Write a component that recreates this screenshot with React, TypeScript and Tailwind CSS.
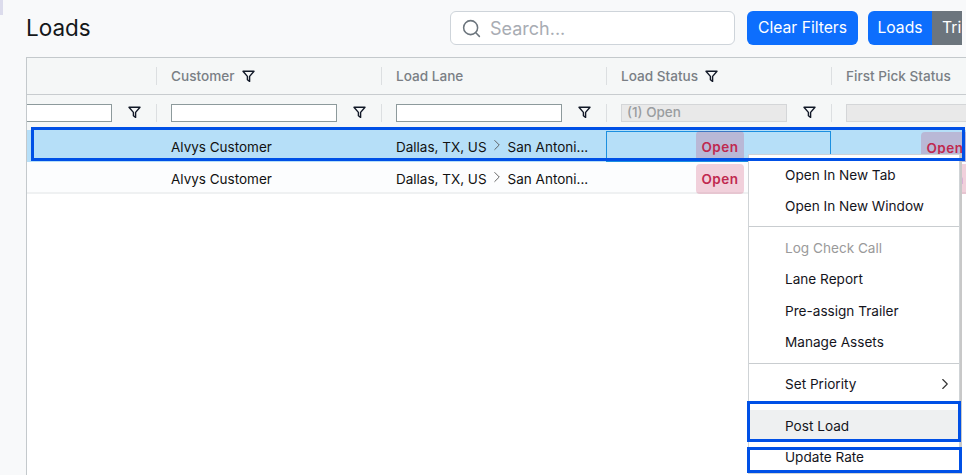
import { ChevronRight, Search } from 'lucide-react';

const columns = ['Customer', 'Load Lane', 'Load Status', 'First Pick Status'];

function Funnel() {
  return (
    <svg width="13" height="13" viewBox="0 0 13 13" fill="none" stroke="#111827" strokeWidth="1.4" className="shrink-0">
      <path d="M1 1.2h11L7.6 6.4v5L5.4 9.8V6.4z" strokeLinejoin="round" />
    </svg>
  );
}

function HeaderCell({ label, filter }: { label: string; filter?: boolean }) {
  return (
    <div className="flex h-full w-[224px] shrink-0 items-center gap-[7px] pl-[14px]">
      <span className="pt-px text-[13.6px] font-medium text-[#7a7f85]">{label}</span>
      {filter && <Funnel />}
    </div>
  );
}

function FilterCell({ value, disabled }: { value?: string; disabled?: boolean }) {
  return (
    <div className="flex h-full w-[224px] shrink-0 items-center pl-[14px]">
      <div
        className={`flex h-[18px] w-[166px] items-center border px-[5px] text-[13.5px] font-medium ${
          disabled ? 'border-[#d4d6d8] bg-[#e9e9e9] text-[#9a9da0]' : 'border-[#8d9a9c] bg-white'
        }`}
      >
        {value}
      </div>
      <div className="ml-4">
        <Funnel />
      </div>
    </div>
  );
}

function Divider() {
  return <div className="h-[18px] w-px shrink-0 bg-[#dcdfe1]" />;
}

function OpenBadge({ selected }: { selected?: boolean }) {
  return (
    <span
      className={`flex h-[30px] w-[48px] items-center justify-center rounded-sm bg-[rgba(200,30,80,0.2)] text-[13.5px] font-semibold tracking-[0.5px] text-[#c0284f] ${
        selected ? 'pt-[2px]' : ''
      }`}
    >
      Open
    </span>
  );
}

function LoadRow({ selected }: { selected?: boolean }) {
  const textPad = selected ? 'pt-[2px]' : 'pt-[4px]';
  return (
    <div
      className={`flex h-[32px] items-center text-[13.5px] text-[#111] ${
        selected ? 'bg-[#b6dff8]' : 'border-b-2 border-[#eff1f2] bg-[#fcfdfe]'
      }`}
    >
      <div className="w-[129px] shrink-0" />
      <div className={`w-[225px] shrink-0 pl-[15px] ${textPad}`}>Alvys Customer</div>
      <div className={`flex w-[225px] shrink-0 items-center pl-[15px] ${textPad}`}>
        Dallas, TX, US
        <ChevronRight size={18} strokeWidth={1.2} className="mx-[1.5px] mb-[5px] text-[#555]" />
        San Antoni...
      </div>
      <div
        className={`flex w-[225px] shrink-0 items-end self-end border pl-[89px] ${
          selected ? 'h-[31px] border-[#1b8fe0]' : 'mb-[-2px] h-[30px] border-transparent border-b-0'
        }`}
      >
        <OpenBadge selected={selected} />
      </div>
      <div className={`flex w-[225px] shrink-0 items-end self-end pl-[90px] ${selected ? 'h-[31px]' : 'mb-[-2px] h-[30px]'}`}>
        <OpenBadge selected={selected} />
      </div>
    </div>
  );
}

function MenuItem({ label, muted, active, arrow }: { label: string; muted?: boolean; active?: boolean; arrow?: boolean }) {
  return (
    <div
      className={`flex h-[31.3px] items-center justify-between pl-[36px] pr-[5px] text-[13.6px] ${
        muted ? 'text-[#9a9a9a]' : 'text-[#14141c]'
      } ${active ? 'bg-[#eef0f1]' : ''}`}
    >
      {label}
      {arrow && <ChevronRight size={18} strokeWidth={1.5} className="text-[#333]" />}
    </div>
  );
}

export default function App() {
  return (
    <div className="relative h-[475px] w-[966px] overflow-hidden bg-[#f8f9fa] font-['Inter',sans-serif]">
      <div className="absolute left-0 top-0 h-[15px] w-[3px] bg-[#dcdcec]" />

      <div className="flex h-[57px] items-start pl-[26px]">
        <h1 className="mt-[12px] w-[65px] text-[22.5px] leading-[32px] text-[#14171a]">Loads</h1>
        <div className="ml-[359px] mt-[11px] flex h-[34px] w-[285px] shrink-0 items-center gap-2 rounded-md border border-[#ced4da] bg-white pl-[10px]">
          <Search size={21} strokeWidth={1.75} className="text-[#6c757d]" />
          <span className="text-[18px] text-[#a8acb3]">Search...</span>
        </div>
        <button className="ml-[12px] mt-[11px] h-[34px] w-[111px] shrink-0 rounded-md bg-[#0d6efd] text-[15.7px] text-white">Clear Filters</button>
        <div className="ml-[10px] mt-[11px] flex h-[34px] w-[94px] shrink-0 overflow-hidden rounded-l-md text-[15.7px] text-white">
          <span className="flex w-[64px] shrink-0 items-center justify-center bg-[#0d6efd]">Loads</span>
          <span className="flex w-[30px] shrink-0 items-center overflow-hidden bg-[#6c757d] pl-[10px]">Trips</span>
        </div>
      </div>

      <div className="ml-[26px] h-[418px] border-l border-t border-[#c4c9cc] bg-white">
        <div className="flex h-[37px] items-center border-b border-[#c8cccf] bg-[#f5f7f7]">
          <div className="w-[129px] shrink-0" />
          {columns.map((c) => (
            <div key={c} className="flex h-full shrink-0 items-center">
              <Divider />
              <HeaderCell label={c} filter={c === 'Customer' || c === 'Load Status'} />
            </div>
          ))}
        </div>
        <div className="flex h-[35px] items-center bg-[#f5f7f7]">
          <div className="flex w-[129px] shrink-0 items-center">
            <div className="h-[18px] w-[85px] border border-l-0 border-[#8d9a9c] bg-white" />
            <div className="ml-4">
              <Funnel />
            </div>
          </div>
          <Divider />
          <FilterCell />
          <Divider />
          <FilterCell />
          <Divider />
          <FilterCell value="(1) Open" disabled />
          <Divider />
          <FilterCell disabled />
        </div>
        <LoadRow selected />
        <LoadRow />
      </div>

      {/* context menu */}
      <div className="absolute left-[748px] top-[154px] w-[212px] border border-[#cfd3d6] bg-white shadow-[2px_0_0_#c8c8c8]">
        <div className="border-b border-[#c9cdd0] pb-[4px] pt-[5px]">
          <div className="flex h-[31px] items-center pl-[36px] text-[13.6px] text-[#14141c]">Open In New Tab</div>
          <div className="flex h-[31px] items-center pl-[36px] text-[13.6px] text-[#14141c]">Open In New Window</div>
        </div>
        <div className="border-b border-[#c9cdd0] pb-[5px] pt-[5.6px]">
          <MenuItem label="Log Check Call" muted />
          <MenuItem label="Lane Report" />
          <MenuItem label="Pre-assign Trailer" />
          <MenuItem label="Manage Assets" />
        </div>
        <div className="pt-[5px]">
          <MenuItem label="Set Priority" arrow />
          <div className="h-[10px]" />
          <MenuItem label="Post Load" active />
          <MenuItem label="Update Rate" />
        </div>
      </div>

      {/* annotation boxes */}
      <div className="absolute left-[31px] top-[127px] h-[34px] w-[934px] border-[3px] border-[#0050e6]" />
      <div className="absolute left-[747px] top-[401px] h-[41px] w-[214px] border-[3px] border-[#0050e6]" />
      <div className="absolute left-[747px] top-[447px] h-[26px] w-[215px] border-[3px] border-[#0050e6]" />
    </div>
  );
}
